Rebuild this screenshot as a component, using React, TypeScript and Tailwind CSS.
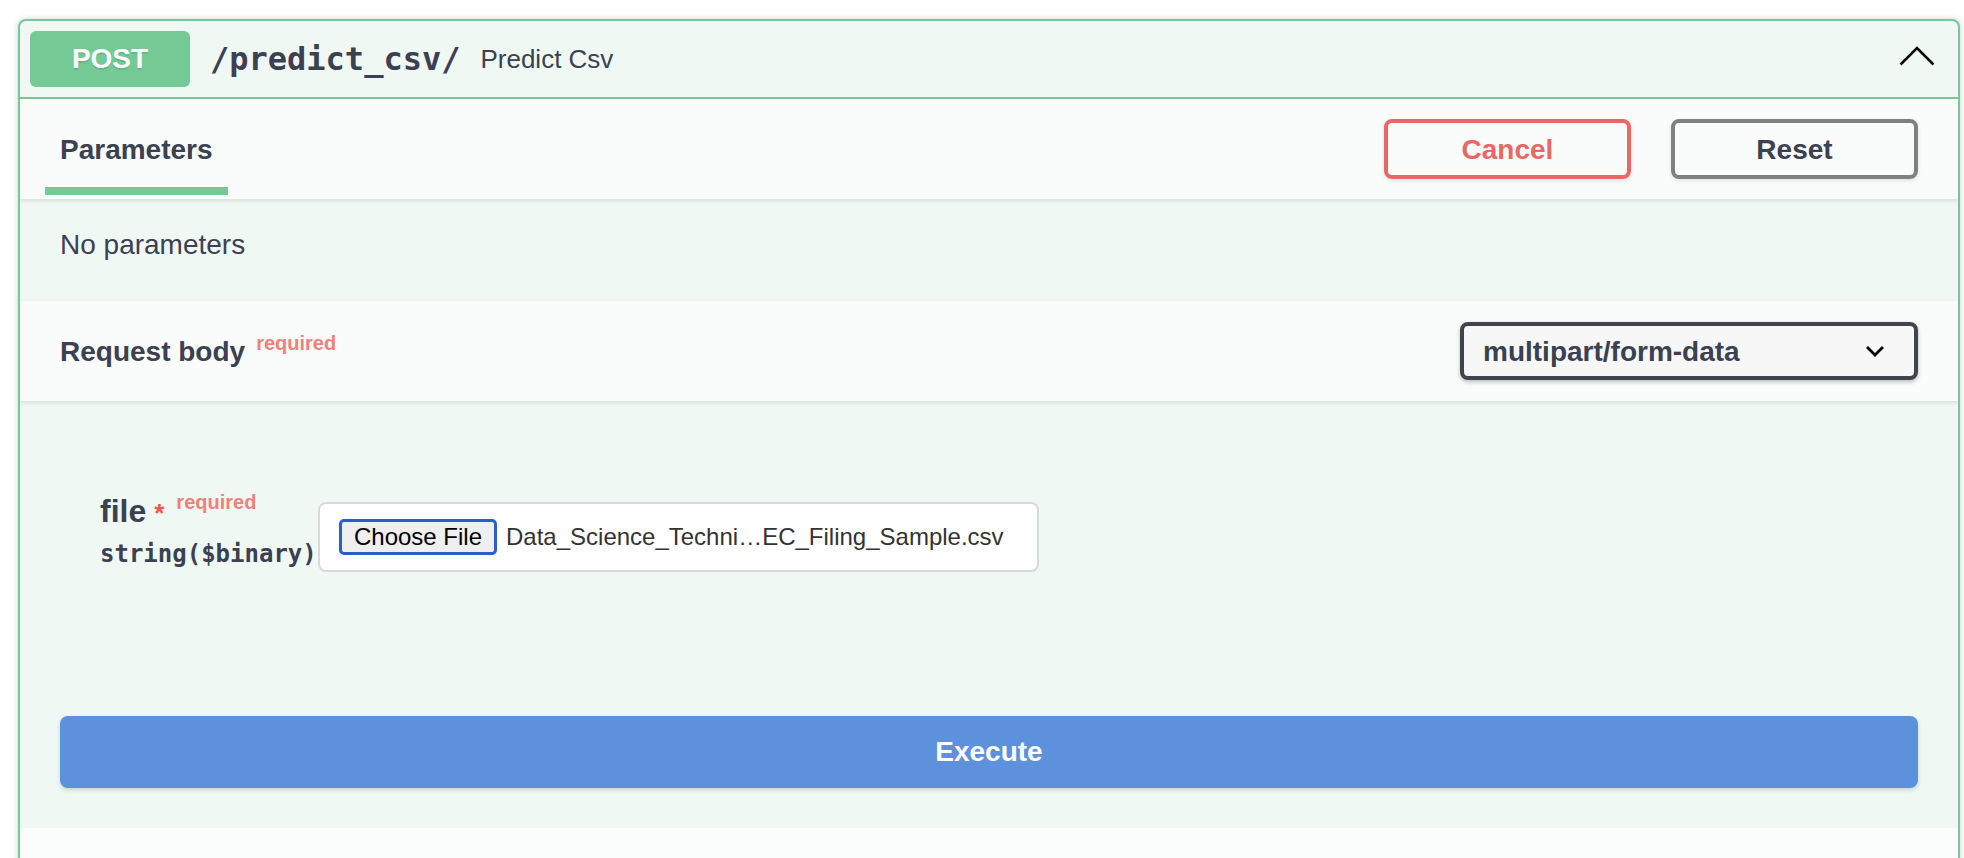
import React from 'react';

const SwaggerOperation = () => {
  return (
    <div className="h-[858px] overflow-hidden bg-white pl-[18px] pr-[4px] pt-[19px] font-['Liberation_Sans',Arial,sans-serif] text-[#3b4151]">
      <div className="overflow-hidden rounded-[8px] border-2 border-[#75c995] bg-[#eff8f3] shadow-[0_0_6px_rgba(0,0,0,0.19)]">
        {/* Summary bar */}
        <div className="flex h-[78px] items-center border-b-2 border-[#75c995] px-[10px]">
          <div className="flex h-[56px] w-[160px] items-center justify-center rounded-[6px] bg-[#75c995] text-[28px] font-bold text-white [text-shadow:0_2px_0_rgba(0,0,0,0.1)]">
            POST
          </div>
          <span className="px-[20px] font-['DejaVu_Sans_Mono',monospace] text-[32px] font-bold text-[#3b4151]">
            /predict_csv/
          </span>
          <span className="text-[26px] text-[#3b4151]">Predict Csv</span>
          <svg className="mb-[6px] ml-auto mr-[13px]" width="36" height="20" viewBox="0 0 36 20">
            <polyline points="1.5,18.5 18,2 34.5,18.5" fill="none" stroke="#000" strokeWidth="2.6" />
          </svg>
        </div>

        {/* Parameters tab header */}
        <div className="relative z-10 flex h-[100px] items-center bg-[#f9fcfa] px-[40px] shadow-[0_2px_4px_rgba(0,0,0,0.1)]">
          <h4 className="pt-[2px] text-[28px] font-bold">Parameters</h4>
          <div className="absolute left-[25px] top-[88px] h-[8px] w-[183px] bg-[#75c995]" />
          <div className="ml-auto flex gap-[40px]">
            <button className="h-[60px] w-[247px] rounded-[8px] border-4 border-[#e96764] pt-[2px] text-[28px] font-bold text-[#e96764] shadow-[0_2px_4px_rgba(0,0,0,0.1)]">
              Cancel
            </button>
            <button className="h-[60px] w-[247px] rounded-[8px] border-4 border-[#808080] pt-[2px] text-[28px] font-bold text-[#3b4151] shadow-[0_2px_4px_rgba(0,0,0,0.1)]">
              Reset
            </button>
          </div>
        </div>

        {/* No parameters */}
        <div className="h-[102px] px-[40px] pt-[29px] text-[28px] leading-[34px]">No parameters</div>

        {/* Request body header */}
        <div className="relative z-10 flex h-[100px] items-center bg-[#f9fcfa] px-[40px] shadow-[0_2px_4px_rgba(0,0,0,0.1)]">
          <h4 className="pt-[2px] text-[28px] font-bold">
            Request body
            <span className="relative top-[-11px] ml-[11px] text-[20px] font-bold text-[#f0807a]">required</span>
          </h4>
          <div className="ml-auto flex h-[58px] w-[458px] items-center justify-between rounded-[8px] border-4 border-[#41444e] bg-[#f7f7f7] pl-[19px] pr-[29px] shadow-[0_2px_4px_rgba(0,0,0,0.25)]">
            <span className="pt-[2px] text-[28px] font-bold">multipart/form-data</span>
            <svg width="20" height="12" viewBox="0 0 20 12">
              <polyline points="2,2 10,10 18,2" fill="none" stroke="#000" strokeWidth="2.8" />
            </svg>
          </div>
        </div>

        {/* Body */}
        <div className="flex h-[427px] flex-col px-[40px]">
          <div className="mt-[92px] flex items-start pl-[40px]">
            <div className="w-[218px]">
              <div className="text-[32px] font-bold leading-[36px]">
                file
                <span className="ml-[8px] text-[26px] text-[#f0574f]">*</span>
                <span className="relative top-[-13px] ml-[12px] text-[20px] font-bold text-[#f0807a]">required</span>
              </div>
              <div className="mt-[6px] font-['DejaVu_Sans_Mono',monospace] text-[24px] font-bold leading-[30px] text-[#3b4151]">
                string($binary)
              </div>
            </div>
            <div className="mt-[9px] flex h-[70px] w-[721px] items-center rounded-[8px] border-2 border-[#d9d9d9] bg-white pl-[19px]">
              <div className="flex h-[36px] w-[158px] items-center justify-center rounded-[5px] border-[3px] border-[#2a5fcb] bg-[#efefef] text-[24px] text-black">
                Choose File
              </div>
              <span className="ml-[9px] text-[24px] text-[#333]">Data_Science_Techni…EC_Filing_Sample.csv</span>
            </div>
          </div>
          <button className="mb-[40px] mt-auto flex h-[72px] w-full items-center justify-center rounded-[8px] bg-[#5e91dc] text-[28px] font-bold text-white shadow-[0_2px_4px_rgba(0,0,0,0.15)]">
            Execute
          </button>
        </div>

        {/* Responses header (cut off) */}
        <div className="h-[100px] bg-[#fafdfb]" />
      </div>
    </div>
  );
};

export default SwaggerOperation;
